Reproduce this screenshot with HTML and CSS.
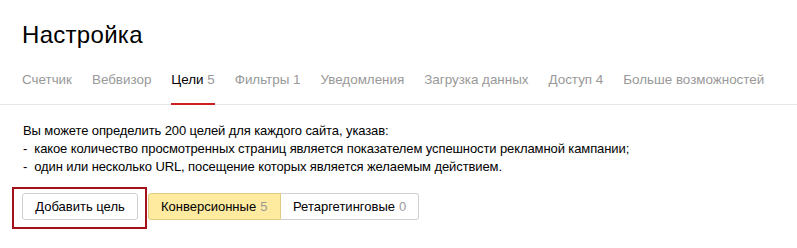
FILE: index.html
```html
<!DOCTYPE html>
<html lang="ru">
<head>
<meta charset="utf-8">
<link rel="stylesheet" href="styles.css">
</head>
<body>
<div class="page">
  <h1 class="title">Настройка</h1>
  <nav class="tabs">
    <span class="tab">Счетчик</span>
    <span class="tab">Вебвизор</span>
    <span class="tab tab-active">Цели <span class="count">5</span></span>
    <span class="tab">Фильтры <span class="count">1</span></span>
    <span class="tab">Уведомления</span>
    <span class="tab">Загрузка данных</span>
    <span class="tab">Доступ <span class="count">4</span></span>
    <span class="tab">Больше возможностей</span>
  </nav>
  <div class="content">
    <p class="info">Вы можете определить 200 целей для каждого сайта, указав:<br>-&nbsp; какое количество просмотренных страниц является показателем успешности рекламной кампании;<br>-&nbsp; один или несколько URL, посещение которых является желаемым действием.</p>
    <div class="actions">
      <div class="add-wrap">
        <button class="btn">Добавить цель</button>
        <span class="highlight"></span>
      </div>
      <div class="radio-group">
        <span class="radio radio-checked">Конверсионные <span class="count">5</span></span>
        <span class="radio">Ретаргетинговые <span class="count">0</span></span>
      </div>
    </div>
  </div>
</div>
</body>
</html>
```

FILE: styles.css
```css
* { box-sizing: border-box; }
html, body { margin: 0; padding: 0; background: #fff; }
body {
  font-family: "Liberation Sans", Arial, sans-serif;
  color: #000;
  width: 797px;
  height: 248px;
  overflow: hidden;
}
.page { padding-top: 20px; }
.title {
  margin: 0 0 0 22px;
  font-weight: normal;
  font-size: 24px;
  letter-spacing: 0.3px;
  line-height: 30px;
  height: 30px;
}
.tabs {
  display: flex;
  gap: 20px;
  padding-left: 22px;
  margin-top: 19px;
  border-bottom: 1px solid #e6e6e6;
  height: 36px;
}
.tab {
  font-size: 13.4px;
  color: #999;
  line-height: 18px;
  padding-top: 2px;
  white-space: nowrap;
  position: relative;
}
.tab-active { color: #000; }
.tab-active::after {
  content: "";
  position: absolute;
  left: 0;
  right: 0;
  bottom: -1px;
  height: 2px;
  background: #cc1f1f;
}
.count { color: #999; }
.content { padding-left: 22px; }
.info {
  margin: 17px 0 0;
  padding-left: 1px;
  font-size: 13px;
  letter-spacing: -0.1px;
  line-height: 18px;
  white-space: nowrap;
}
.actions {
  display: flex;
  gap: 10px;
  margin-top: 17px;
}
.add-wrap { position: relative; display: flex; }
.btn {
  font-family: inherit;
  font-size: 13px;
  color: #000;
  background: #fff;
  border: 1px solid #d0d0d0;
  border-radius: 3px;
  height: 27px;
  width: 116px;
  padding: 0;
}
.highlight {
  position: absolute;
  left: -10px;
  top: -6px;
  width: 135px;
  height: 42px;
  border: 2px solid #a3111c;
  pointer-events: none;
}
.radio-group {
  display: flex;
  height: 27px;
}
.radio {
  display: flex;
  align-items: center;
  font-size: 13px;
  padding: 0 12px;
  border: 1px solid #d0d0d0;
  white-space: nowrap;
}
.radio .count { margin-left: 4px; }
.radio-checked {
  background: #ffeba0;
  border-color: #e0cc80;
  border-radius: 3px 0 0 3px;
  width: 133px;
}
.radio:last-child {
  border-left: none;
  border-radius: 0 3px 3px 0;
  width: 138px;
}
```
